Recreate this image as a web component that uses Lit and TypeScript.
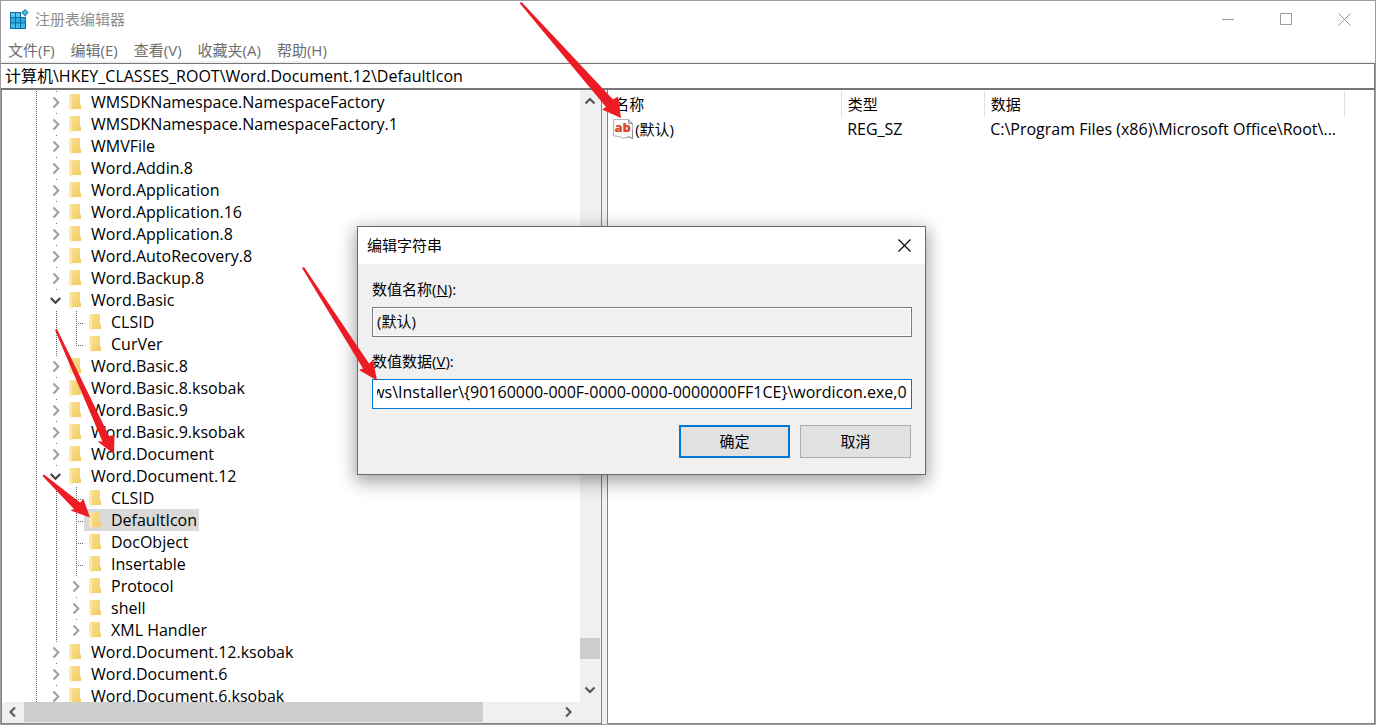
import { LitElement, html, css, svg, nothing } from "lit";
import { customElement, query } from "lit/decorators.js";
import { classMap } from "lit/directives/class-map.js";

type State = "closed" | "open" | "leaf";

interface TreeNode {
  name: string;
  level: 1 | 2;
  state: State;
  last?: boolean;
  selected?: boolean;
}

const n = (name: string, state: State = "closed"): TreeNode => ({ name, level: 1, state });
const c = (name: string, state: State = "leaf", extra: Partial<TreeNode> = {}): TreeNode => ({
  name,
  level: 2,
  state,
  ...extra,
});

const NODES: TreeNode[] = [
  n("WMSDKNamespace.NamespaceFactory"),
  n("WMSDKNamespace.NamespaceFactory.1"),
  n("WMVFile"),
  n("Word.Addin.8"),
  n("Word.Application"),
  n("Word.Application.16"),
  n("Word.Application.8"),
  n("Word.AutoRecovery.8"),
  n("Word.Backup.8"),
  n("Word.Basic", "open"),
  c("CLSID"),
  c("CurVer", "leaf", { last: true }),
  n("Word.Basic.8"),
  n("Word.Basic.8.ksobak"),
  n("Word.Basic.9"),
  n("Word.Basic.9.ksobak"),
  n("Word.Document"),
  n("Word.Document.12", "open"),
  c("CLSID"),
  c("DefaultIcon", "leaf", { selected: true }),
  c("DocObject"),
  c("Insertable"),
  c("Protocol", "closed"),
  c("shell", "closed"),
  c("XML Handler", "closed", { last: true }),
  n("Word.Document.12.ksobak"),
  n("Word.Document.6"),
  n("Word.Document.6.ksobak"),
];

const MENUS = ["文件(F)", "编辑(E)", "查看(V)", "收藏夹(A)", "帮助(H)"];

/* Red annotation arrows: tail, then one side of the head, the tip and the other side. */
const ARROWS = [
  "519.5,3 606,107 602,109.5 621,118 618,96.5 613,99.5 521.5,2",
  "302,268 363,368.5 359,370 377,380.5 373,360 369,363.5 304,267",
  "55,330 102.5,441.5 97.5,441.5 114,454 114.5,435 109,436 57,329",
  "42.5,476 74,509 70.5,510.5 90,517.5 83.5,499 80,502.5 44,474.5",
];

const chevron = (dir: "right" | "left" | "down" | "up" | "expand" | "collapse") => {
  const d = {
    right: "M5 2.5 L9.5 7 L5 11.5",
    left: "M9 2.5 L4.5 7 L9 11.5",
    down: "M2.5 4.5 L7 9 L11.5 4.5",
    up: "M2.5 9.5 L7 5 L11.5 9.5",
    expand: "M4.5 2.6 L9.3 7.6 L4.5 12.6",
    collapse: "M1.8 5 L6.5 9.7 L11.2 5",
  }[dir];
  return html`<svg class="chev" width="14" height="14" viewBox="0 0 14 14" aria-hidden="true">
    <path d=${d} fill="none" stroke="currentColor" stroke-width="2.1" />
  </svg>`;
};

const folder = html`<svg class="folder" width="13" height="17" viewBox="0 0 13 17" aria-hidden="true">
  <defs>
    <linearGradient id="f" x1="0" y1="0" x2="1" y2="1">
      <stop offset="0" stop-color="#fbe196" />
      <stop offset="1" stop-color="#f2cb62" />
    </linearGradient>
  </defs>
  <path d="M1 0h10v10.5l1 .6V15H3z" fill="url(#f)" />
  <path d="M0 0.4L3.2 2.2V16.6L0 14.6z" fill="#ffe9a6" />
  <path d="M3.2 2.2V16.6" stroke="#f6d67c" stroke-width=".6" />
</svg>`;

@customElement("app-root")
export class AppRoot extends LitElement {
  static styles = css`
    :host {
      display: block;
      height: 100vh;
      font-family: "Open Sans", "Noto Sans CJK SC", sans-serif;
      font-size: 15px;
      line-height: 22px;
      color: #000;
    }
    * {
      box-sizing: border-box;
    }
    button,
    input {
      font: inherit;
      color: inherit;
      margin: 0;
      outline: none;
      border-radius: 0;
    }
    .window {
      position: relative;
      height: 100%;
      display: flex;
      flex-direction: column;
      background: #fff;
      border: 1px solid #9b9ba1;
      overflow: hidden;
    }
    .title {
      display: flex;
      align-items: center;
      height: 36px;
      margin-bottom: 2px;
      flex: none;
      padding-left: 8px;
      padding-right: 2px;
      color: #8e8e8e;
    }
    .title h1 {
      flex: 1;
      margin: 0 0 0 6px;
      font-size: 15px;
      font-weight: 400;
    }
    .win-btn {
      width: 58px;
      height: 36px;
      border: 0;
      padding: 0;
      background: none;
      color: #999;
      display: grid;
      place-items: center;
    }
    .menu {
      display: flex;
      gap: 16px;
      height: 22px;
      flex: none;
      padding-left: 7px;
      color: #6e6e6e;
    }
    .menu button {
      border: 0;
      padding: 0;
      background: none;
    }
    .address {
      flex: none;
      width: 100%;
      height: 27px;
      padding: 0 4px 2px;
      border: 1px solid #77777b;
      border-width: 1px 1px 2px 0;
      background: #fff;
    }
    .bar {
      flex: none;
      border-top: 2px solid #f0f0f0;
      display: flex;
    }
    .address,
    .tree,
    .value,
    #data {
      font-size: 16px;
    }
    .panes {
      flex: 1;
      min-height: 0;
      display: grid;
      grid-template-columns: 43.75% 1fr;
      background: #f0f0f0;
      column-gap: 5px;
    }
    .left {
      min-width: 0;
      min-height: 0;
      display: grid;
      grid-template-columns: 1fr 21px;
      grid-template-rows: 1fr 21px;
      border: 1px solid #838388;
      border-top: 0;
      background: #f0f0f0;
    }
    .tree {
      margin: 0;
      padding: 1px 0 0 22px;
      list-style: none;
      overflow: hidden;
      background: #fff;
      min-height: 0;
    }
    .node {
      display: flex;
      height: 22px;
      white-space: nowrap;
    }
    .cell {
      width: 20px;
      height: 22px;
      flex: none;
      color: #a0a0a0;
      display: grid;
      place-items: center start;
      padding-left: 5px;
      background-repeat: no-repeat;
      background-position: 12px 0;
    }
    .line {
      background-image: repeating-linear-gradient(#666 0 1px, transparent 1px 2px);
      background-size: 1px 100%;
    }
    .dot {
      background-image: linear-gradient(#777, #777);
      background-size: 1px 1px;
    }
    .leaf {
      background-image: repeating-linear-gradient(#666 0 1px, transparent 1px 2px),
        repeating-linear-gradient(90deg, #666 0 1px, transparent 1px 2px);
      background-size: 1px 100%, 8px 1px;
      background-position: 12px 0, 12px 12px;
    }
    .leaf.last {
      background-size: 1px 12px, 8px 1px;
    }
    .open {
      color: #404040;
    }
    .chev {
      display: block;
    }
    .item {
      display: flex;
      align-items: center;
      gap: 9px;
      padding: 0 2px 0 5px;
    }
    .selected .item {
      background: #d9d9d9;
    }
    .folder {
      display: block;
    }
    .vbar,
    .hbar {
      display: flex;
      color: #555;
      background: #f0f0f0;
    }
    .vbar {
      flex-direction: column;
      padding: 1px 1px 2px 0;
      align-items: center;
    }
    .hbar {
      padding: 0 2px 1px 1px;
      align-items: center;
    }
    .arrow {
      flex: none;
      width: 20px;
      height: 20px;
      padding: 0;
      border: 0;
      background: none;
      color: inherit;
      display: grid;
      place-items: center;
    }
    .track {
      flex: 1;
      align-self: stretch;
      display: flex;
    }
    .vbar .track {
      flex-direction: column;
    }
    .hbar .track {
      padding-left: 1px;
    }
    .thumb {
      background: #cdcdcd;
    }
    .right {
      min-width: 0;
      background: #fff;
      border: 1px solid #838388;
      border-top: 0;
      overflow: hidden;
    }
    .list {
      border-collapse: collapse;
      table-layout: fixed;
      width: 737px;
      margin-top: 1px;
    }
    .c1 {
      width: 233px;
    }
    .c2 {
      width: 143px;
    }
    .list th,
    .list td {
      text-align: left;
      font-weight: 400;
      padding: 0 6px;
      white-space: nowrap;
      overflow: hidden;
      text-overflow: ellipsis;
    }
    .list th {
      height: 26px;
      border-right: 1px solid #e2e2e2;
    }
    .list td {
      height: 24px;
    }
    .name {
      display: flex;
      align-items: center;
      gap: 2px;
      margin-left: -1px;
    }
    .dialog {
      position: absolute;
      left: calc(50% - 331px);
      top: calc(50% - 137px);
      width: 569px;
      background: #f0f0f0;
      border: 1px solid #6a6a6a;
      box-shadow: 0 5px 16px 2px rgba(0, 0, 0, 0.36);
    }
    .dlg-title {
      display: flex;
      align-items: center;
      justify-content: space-between;
      height: 37px;
      padding-left: 9px;
      background: #fff;
    }
    .dlg-title h2 {
      margin: 0;
      font-size: 15px;
      font-weight: 400;
    }
    .close {
      width: 42px;
      height: 36px;
      padding: 0;
      border: 0;
      background: none;
      display: grid;
      place-items: center;
    }
    .form {
      display: flex;
      flex-direction: column;
      padding: 14px 13px 16px 14px;
    }
    .form label {
      height: 22px;
      margin-bottom: 7px;
    }
    .field {
      width: 100%;
      height: 30px;
      padding: 0 4px 3px;
      border: 1px solid #7a7a7a;
      margin-bottom: 13px;
      background: #fff;
    }
    .readonly {
      background: #f0f0f0;
      box-shadow: inset 0 0 0 1px #fff;
    }
    .active {
      border-color: #0078d7;
      margin-bottom: 16px;
    }
    .actions {
      display: flex;
      justify-content: flex-end;
      gap: 10px;
      padding-right: 1px;
    }
    .btn {
      width: 111px;
      height: 33px;
      padding: 0;
      background: #e1e1e1;
      border: 1px solid #adadad;
    }
    .primary {
      border: 2px solid #0078d7;
    }
    .marks {
      position: absolute;
      left: -1px;
      top: -1px;
      pointer-events: none;
    }
  `;

  @query("#data") dataField!: HTMLInputElement;

  firstUpdated() {
    const toEnd = () => {
      this.dataField.scrollLeft = this.dataField.scrollWidth;
    };
    toEnd();
    document.fonts?.ready.then(toEnd);
  }

  private node(t: TreeNode) {
    const own = html`<span
      class=${classMap({
        cell: true,
        dot: t.state !== "leaf",
        open: t.state === "open",
        leaf: t.state === "leaf",
        last: !!t.last,
      })}
      >${t.state === "leaf" ? nothing : chevron(t.state === "open" ? "collapse" : "expand")}</span
    >`;
    return html`<li
      class=${classMap({ node: true, selected: !!t.selected })}
      role="treeitem"
      aria-level=${t.level}
      aria-selected=${t.selected ? "true" : "false"}
    >
      <span class="cell line"></span>${t.level === 2 ? html`<span class="cell line"></span>` : nothing}${own}
      <span class="item">${folder}<span>${t.name}</span></span>
    </li>`;
  }

  render() {
    return html`
      <main class="window">
        <header class="title">
          <svg width="20" height="20" viewBox="0 0 20 20" aria-hidden="true">
            <path d="M1 3h11v5h5v12H1z" fill="#0a6aa3" />
            <path d="M2 4h4v4H2zM7 4h4v4H7z" fill="#5cc6ee" />
            <path d="M2 9h4v4.6H2zM7 9h4v4.6H7zM12 9h4v4.6h-4z" fill="#2fa9de" />
            <path d="M2 14.6h4V19H2zM7 14.6h4V19H7zM12 14.6h4V19h-4z" fill="#3fbbe9" />
            <path d="M16 0l3.8 3.6L16 7.4 12.2 3.6z" fill="#2a86b8" />
            <path d="M16 1.4l2.2 2.1L16 5.7l-2.2-2.2z" fill="#56bde8" />
          </svg>
          <h1>注册表编辑器</h1>
          <button class="win-btn" aria-label="最小化">
            <svg width="13" height="13"><path d="M0 6.5h12" stroke="currentColor" /></svg>
          </button>
          <button class="win-btn" aria-label="最大化">
            <svg width="13" height="13"><path d="M.5.5h11v11H.5z" fill="none" stroke="currentColor" /></svg>
          </button>
          <button class="win-btn" aria-label="关闭">
            <svg width="13" height="13"><path d="M.5.5l12 12M12.5.5l-12 12" stroke="currentColor" /></svg>
          </button>
        </header>
        <nav class="menu">${MENUS.map((m) => html`<button>${m}</button>`)}</nav>
        <div class="bar">
          <input
            class="address"
            aria-label="地址"
            .value=${"计算机\\HKEY_CLASSES_ROOT\\Word.Document.12\\DefaultIcon"}
          />
        </div>
        <div class="panes">
          <section class="left">
            <ul class="tree" role="tree">
              ${NODES.map((t) => this.node(t))}
            </ul>
            <div class="vbar">
              <button class="arrow" aria-label="向上">${chevron("up")}</button>
              <div class="track">
                <span style="flex: 527"></span><span class="thumb" style="flex: 21; width: 20px"></span
                ><span style="flex: 21"></span>
              </div>
              <button class="arrow" aria-label="向下">${chevron("down")}</button>
            </div>
            <div class="hbar">
              <button class="arrow" aria-label="向左">${chevron("left")}</button>
              <div class="track"><span class="thumb" style="flex: 459"></span><span style="flex: 75"></span></div>
              <button class="arrow" aria-label="向右">${chevron("right")}</button>
            </div>
          </section>
          <section class="right">
            <table class="list">
              <colgroup>
                <col class="c1" />
                <col class="c2" />
                <col />
              </colgroup>
              <thead>
                <tr>
                  <th>名称</th>
                  <th>类型</th>
                  <th>数据</th>
                </tr>
              </thead>
              <tbody>
                <tr>
                  <td>
                    <span class="name">
                      <svg width="20" height="20" viewBox="0 0 20 20" aria-hidden="true">
                        <path
                          d="M.5.5h15l4 4v15l-3-1.6-3 .6-3.2 1-3-1.8-3.4-.4-3.4-.6z"
                          fill="#fafafa"
                          stroke="#b5b5b5"
                        />
                        <path d="M15.5.5v4h4z" fill="#ddd" stroke="#999" />
                        <path d="M13.5 18.5l3-.6 3 1.6v-8" fill="none" stroke="#8b8b8b" />
                        <text
                          x="1.5"
                          y="13"
                          font-family="Open Sans"
                          font-weight="800"
                          font-size="13"
                          fill="#d9482b"
                        >ab</text>
                      </svg>
                      <span>(默认)</span>
                    </span>
                  </td>
                  <td class="value">REG_SZ</td>
                  <td class="value">C:\\Program Files (x86)\\Microsoft Office\\Root\\...</td>
                </tr>
              </tbody>
            </table>
          </section>
        </div>

        <section class="dialog" role="dialog" aria-labelledby="dlg">
          <div class="dlg-title">
            <h2 id="dlg">编辑字符串</h2>
            <button class="close" aria-label="关闭">
              <svg width="13" height="13"><path d="M.5.5l12 12M12.5.5l-12 12" stroke="#000" stroke-width="1.1" /></svg>
            </button>
          </div>
          <div class="form">
            <label for="name">数值名称(<u>N</u>):</label>
            <input id="name" class="field readonly" readonly .value=${"(默认)"} />
            <label for="data">数值数据(<u>V</u>):</label>
            <input
              id="data"
              class="field active"
              .value=${"C:\\Windows\\Installer\\{90160000-000F-0000-0000-0000000FF1CE}\\wordicon.exe,0"}
            />
            <div class="actions">
              <button class="btn primary">确定</button>
              <button class="btn">取消</button>
            </div>
          </div>
        </section>

        <svg class="marks" width="640" height="530" viewBox="0 0 640 530" aria-hidden="true">
          ${ARROWS.map((p) => svg`<polygon points=${p} fill="#ed1c24" />`)}
        </svg>
      </main>
    `;
  }
}
